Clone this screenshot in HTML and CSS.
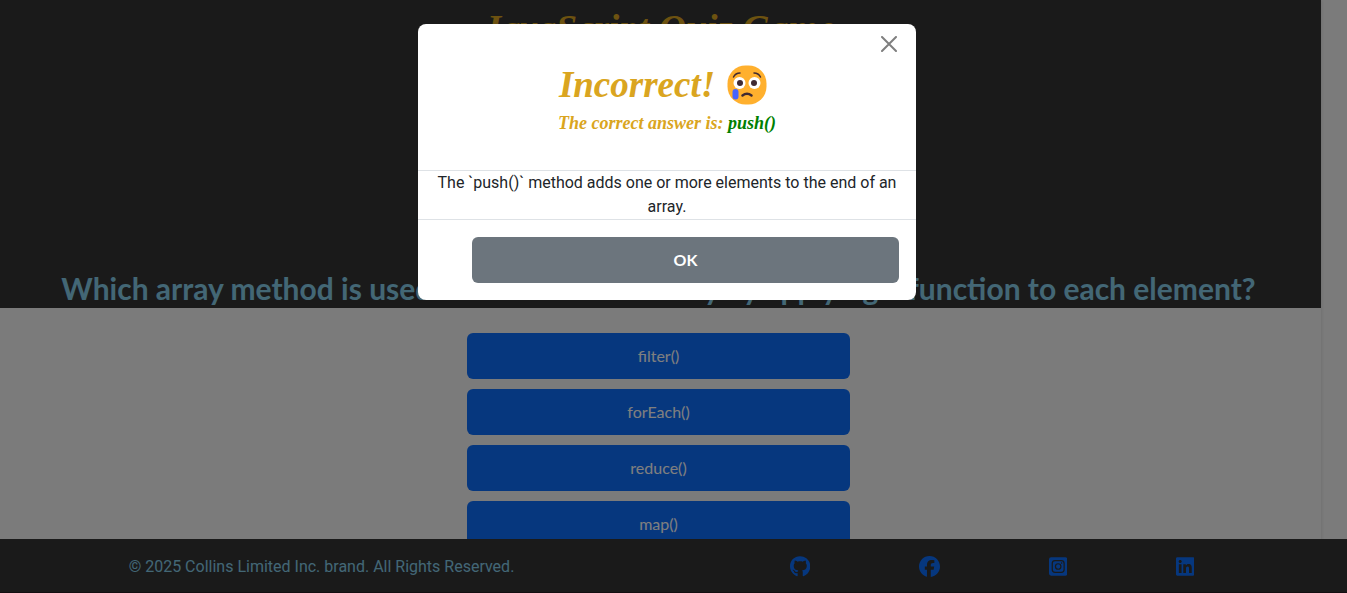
FILE: index.html
```html
<!DOCTYPE html>
<html lang="en">
<head>
<meta charset="utf-8">
<meta name="viewport" content="width=device-width, initial-scale=1">
<title>JavaScript Quiz Game</title>
<link rel="stylesheet" href="styles.css">
</head>
<body>
<main class="quiz">
  <header class="quiz-header">
    <h1 class="quiz-title">JavaScript Quiz Game</h1>
    <h2 class="question">Which array method is used to create a new array by applying a function to each element?</h2>
  </header>
  <div class="options">
    <button class="option" type="button">filter()</button>
    <button class="option" type="button">forEach()</button>
    <button class="option" type="button">reduce()</button>
    <button class="option" type="button">map()</button>
  </div>
</main>

<footer class="site-footer">
  <p class="copyright">© 2025 Collins Limited Inc. brand. All Rights Reserved.</p>
  <nav class="social" aria-label="Social media">
    <a href="#github" aria-label="GitHub"><svg class="icon" viewBox="0 0 496 512"><path d="M165.900 397.400c0 2-2.300 3.600-5.200 3.600-3.300.3-5.600-1.300-5.600-3.600 0-2 2.300-3.600 5.200-3.600 3-.3 5.600 1.300 5.600 3.600zM244.800 8C106.100 8 0 113.300 0 252c0 110.900 69.800 205.800 169.500 239.200 12.800 2.300 17.300-5.600 17.300-12.100 0-6.200-.3-40.400-.3-61.400 0 0-70 15-84.700-29.800 0 0-11.400-29.100-27.800-36.600 0 0-22.900-15.700 1.600-15.400 0 0 24.900 2 38.600 25.800 21.900 38.600 58.600 27.500 72.900 20.900 2.300-16 8.800-27.100 16-33.700-55.900-6.200-112.300-14.300-112.300-110.500 0-27.500 7.600-41.300 23.600-58.900-2.600-6.500-11.100-33.300 2.600-67.900 20.900-6.500 69 27 69 27 20-5.600 41.500-8.500 62.800-8.500s42.800 2.900 62.800 8.500c0 0 48.100-33.600 69-27 13.700 34.700 5.200 61.400 2.600 67.900 16 17.700 25.800 31.500 25.800 58.900 0 96.500-58.900 104.200-114.800 110.500 9.200 7.900 17 22.900 17 46.400 0 33.700-.3 75.400-.3 83.600 0 6.500 4.600 14.400 17.300 12.100C428.200 457.800 496 362.900 496 252 496 113.300 383.500 8 244.800 8z"/></svg></a>
    <a href="#facebook" aria-label="Facebook"><svg class="icon" viewBox="0 0 512 512"><path d="M512 256C512 114.600 397.400 0 256 0S0 114.600 0 256c0 120 82.700 220.800 194.200 248.500V334.200h-52.800V256h52.800v-33.700c0-87.100 39.400-127.500 125-127.500 16.200 0 44.200 3.200 55.700 6.400V172c-6-.6-16.500-1-29.600-1-42 0-58.200 15.900-58.200 57.200V256h83.600l-14.400 78.200h-69.300v175.900C413.800 494.800 512 386.900 512 256z"/></svg></a>
    <a href="#instagram" aria-label="Instagram"><svg class="icon" viewBox="32 0 448 512"><path fill-rule="evenodd" d="M84 32h344q52 0 52 52v344q0 52-52 52H84q-52 0-52-52V84q0-52 52-52zM180 96q-84 0-84 84v152q0 84 84 84h152q84 0 84-84V180q0-84-84-84zm0 30h152q54 0 54 54v152q0 54-54 54H180q-54 0-54-54V180q0-54 54-54zm76 48a82 82 0 1 0 0 164 82 82 0 1 0 0-164zm0 30a52 52 0 1 1 0 104 52 52 0 1 1 0-104zm84-52a19 19 0 1 0 0 38 19 19 0 1 0 0-38z"/></svg></a>
    <a href="#linkedin" aria-label="LinkedIn"><svg class="icon" viewBox="0 0 448 512"><path d="M416 32H31.900C14.300 32 0 46.500 0 64.300v383.400C0 465.500 14.300 480 31.900 480H416c17.600 0 32-14.500 32-32.300V64.300c0-17.800-14.400-32.300-32-32.300zM135.400 416H69V202.200h66.500V416zm-33.200-243c-21.300 0-38.500-17.300-38.500-38.500S80.900 96 102.200 96c21.200 0 38.500 17.300 38.500 38.500 0 21.300-17.200 38.500-38.500 38.500zm282.100 243h-66.400V312c0-24.800-.5-56.700-34.500-56.700-34.600 0-39.900 27-39.900 54.900V416h-66.400V202.200h63.700v29.200h.9c8.900-16.800 30.600-34.500 62.900-34.500 67.200 0 79.700 44.300 79.700 101.900V416z"/></svg></a>
  </nav>
</footer>

<div class="backdrop">
  <section class="modal" role="dialog" aria-modal="true" aria-labelledby="result-title">
    <button class="close" type="button" aria-label="Close"><svg viewBox="0 0 16 16"><path d="M1 1l14 14M15 1L1 15" stroke="currentColor" stroke-width="2" stroke-linecap="round"/></svg></button>
    <header class="modal-header">
      <h2 class="result" id="result-title">Incorrect!
        <svg class="emoji" viewBox="0 0 40 40" role="img" aria-label="Crying face">
          <rect x="0.500" y="0.500" width="39" height="39" rx="18" fill="#ffb02e"/>
          <circle cx="12.500" cy="18" r="6" fill="#fff"/><circle cx="27.500" cy="18" r="6" fill="#fff"/>
          <circle cx="13" cy="18" r="3" fill="#402a32"/><circle cx="27" cy="18" r="3" fill="#402a32"/>
          <path d="M6.500 12Q8.500 8 13 8M33.500 12Q31.500 8 27 8" fill="none" stroke="#402a32" stroke-width="1.500" stroke-linecap="round"/>
          <path d="M15.500 30.500q4.500-3.500 9 0" fill="none" stroke="#402a32" stroke-width="2.500" stroke-linecap="round"/>
          <rect x="5.500" y="24" width="6" height="10.500" rx="3" fill="#4664ff"/>
        </svg>
      </h2>
      <p class="answer">The correct answer is: <span class="answer-value">push()</span></p>
    </header>
    <p class="modal-body">The `push()` method adds one or more elements to the end of an array.</p>
    <div class="modal-footer"><button class="ok" type="button">OK</button></div>
  </section>
</div>
</body>
</html>
```
FILE: styles.css
```css
* { box-sizing: border-box; }
html { height: 100%; }
body {
  margin: 0;
  height: 100%;
  overflow: hidden;
  background: #f7f7f7;
  color: #212529;
  font: 16px/24px Roboto, sans-serif;
}
h1, h2, p { margin: 0; }
button { font-family: Lato, sans-serif; font-size: 16px; border: 0; cursor: pointer; }

.quiz {
  margin-right: 26px;
  min-height: 100%;
  box-shadow: 0 0 4px rgba(0, 0, 0, 0.15);
}
.quiz-header {
  display: flex;
  flex-direction: column;
  gap: 216px;
  padding: 4px 4px 0 0;
  background: #343434;
  text-align: center;
}
.quiz-title {
  color: #daa520;
  font: italic bold 38px/48px "Liberation Serif", serif;
}
.question {
  color: #87ceeb;
  font: bold 30px/40px Lato, sans-serif;
}
.options {
  display: flex;
  flex-direction: column;
  align-items: center;
  gap: 10px;
  padding: 25px 4px 0 0;
}
.option {
  width: 383px;
  max-width: 100%;
  height: 46px;
  padding-bottom: 3px;
  border-radius: 6px;
  background: #0d6efd;
  color: #fff;
}

.site-footer {
  position: fixed;
  inset: auto 0 0;
  display: grid;
  grid-template-columns: 1fr 1fr;
  align-items: center;
  padding: 15px 61px 14px 0;
  border-bottom: 1px solid #261c20;
  background: #343434;
}
.copyright { padding-top: 1px; margin-bottom: -1px; color: #87ceeb; text-align: center; }
.social {
  display: flex;
  justify-content: space-between;
  padding: 0 92px 0 147px;
  color: #0d6efd;
}
.social a { display: flex; color: inherit; }
.icon { height: 21px; fill: currentColor; }

.backdrop {
  position: fixed;
  inset: 0;
  padding: 24px 13px 0 0;
  background: rgba(0, 0, 0, 0.5);
}
.modal {
  position: relative;
  width: 100%;
  max-width: 498px;
  margin: 0 auto;
  border-radius: 8px;
  background: #fff;
  text-align: center;
}
.close {
  position: absolute;
  top: 8px;
  right: 15px;
  padding: 4px;
  background: none;
  color: #7f7f7f;
}
.close svg { display: block; width: 16px; height: 16px; }
.modal-header {
  padding: 37px 16px 33px;
  border-bottom: 1px solid #dee2e6;
  color: #daa520;
  font-family: "Liberation Serif", serif;
  font-style: italic;
  font-weight: bold;
}
.result {
  display: flex;
  justify-content: center;
  align-items: center;
  gap: 12px;
  padding-right: 8px;
  font-size: 37px;
  line-height: 48px;
}
.emoji { width: 40px; height: 40px; }
.answer { font-size: 18px; line-height: 28px; }
.answer-value { color: #008000; }
.modal-body { padding: 0 16px; border-bottom: 1px solid #dee2e6; }
.modal-footer { padding: 17px 17px 17px 54px; }
.ok {
  display: block;
  width: 100%;
  height: 46px;
  padding-bottom: 2px;
  border-radius: 6px;
  background: #6c757d;
  color: #fff;
  font-weight: bold;
}
```
